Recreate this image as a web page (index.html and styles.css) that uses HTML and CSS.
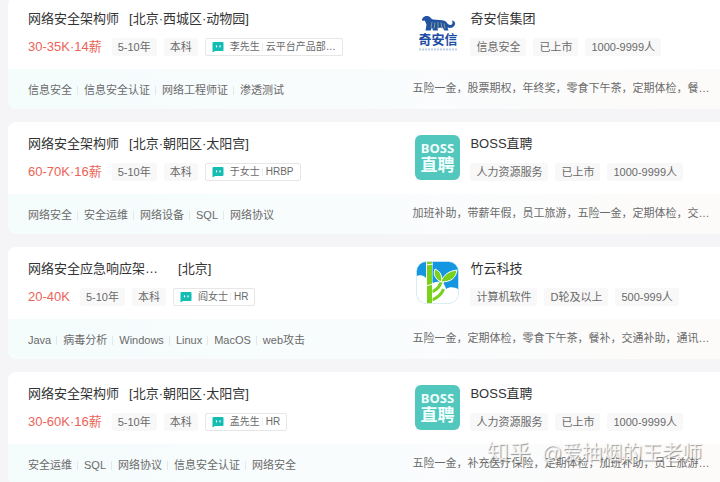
FILE: index.html
```html
<!DOCTYPE html>
<html lang="zh-CN">
<head>
    <meta charset="UTF-8">
    <meta name="viewport" content="width=device-width, initial-scale=1.0">
    <title>网络安全架构师招聘</title>
    <link rel="stylesheet" href="styles.css">
</head>
<body>

<!-- shared icons -->
<svg class="icon-defs" aria-hidden="true">
    <symbol id="icon-chat" viewBox="0 0 12 12">
        <path d="M1.5 1h9a1 1 0 0 1 1 1v7a1 1 0 0 1-1 1H3L0.500 11.500V2a1 1 0 0 1 1-1z" fill="#14bdb2"/>
        <path d="M4.500 5v.8M8 5v.8" stroke="#fff" stroke-width="1.300" stroke-linecap="round"/>
    </symbol>
    <symbol id="logo-boss" viewBox="0 0 45 45">
        <rect width="45" height="45" rx="6" fill="#51c7bd"/>
        <text x="22.5" y="18" text-anchor="middle" class="boss-en">BOSS</text>
        <text x="22.5" y="36" text-anchor="middle" class="boss-cn">直聘</text>
    </symbol>
</svg>

<main class="job-list">

    <article class="job-card">
        <div class="job-body">
            <div class="job-info">
                <div class="job-title">
                    <a href="#" class="job-name">网络安全架构师</a>
                    <span class="job-area">[北京·西城区·动物园]</span>
                </div>
                <div class="tag-row">
                    <span class="salary">30-35K·14薪</span>
                    <span class="tag">5-10年</span>
                    <span class="tag">本科</span>
                    <button type="button" class="boss">
                        <svg class="chat"><use href="#icon-chat"/></svg>
                        <span>李先生</span>
                        <span class="boss-role">云平台产品部…</span>
                    </button>
                </div>
            </div>
            <div class="company">
                <svg class="logo" viewBox="0 0 45 45" role="img" aria-label="奇安信">
                    <rect width="45" height="45" fill="#fff"/>
                    <path d="M7 10c0-3 4-5 7-3.500 2 1 2 2.500 4 3 4 .5 9 0 12 1.500 2 1 3 4 5 4 2.500 0 3-2 2-4.500 3 .5 4 3 2.500 5-1.500 2.500-4.500 3-7 2l1 3h-4l-2-3-5 .5.5 2.500h-5l-1-3-1.500 3h-5l1-6c-1-2-1-3-2-4-1 .5-2.500.5-2.500-.5z" fill="#2053a2"/>
                    <path d="M17 12l-1 6M20 12.500l-1 6M23 12v6.500M26 12.500l1 6M29 13.500l1 5" stroke="#8f9d8a" stroke-width="1"/>
                    <text x="23" y="34" text-anchor="middle" class="qax-cn">奇安信</text>
                    <path d="M4 39.500h39" stroke="#7f9fcf" stroke-width="2" stroke-dasharray="2 1" opacity=".5"/>
                </svg>
                <div>
                    <a href="#" class="company-name">奇安信集团</a>
                    <div class="tag-row">
                        <span class="tag">信息安全</span>
                        <span class="tag">已上市</span>
                        <span class="tag">1000-9999人</span>
                    </div>
                </div>
            </div>
        </div>
        <div class="job-footer">
            <ul class="skills">
                <li>信息安全</li>
                <li>信息安全认证</li>
                <li>网络工程师证</li>
                <li>渗透测试</li>
            </ul>
            <p class="welfare">五险一金，股票期权，年终奖，零食下午茶，定期体检，餐…</p>
        </div>
    </article>

    <article class="job-card">
        <div class="job-body">
            <div class="job-info">
                <div class="job-title">
                    <a href="#" class="job-name">网络安全架构师</a>
                    <span class="job-area">[北京·朝阳区·太阳宫]</span>
                </div>
                <div class="tag-row">
                    <span class="salary">60-70K·16薪</span>
                    <span class="tag">5-10年</span>
                    <span class="tag">本科</span>
                    <button type="button" class="boss">
                        <svg class="chat"><use href="#icon-chat"/></svg>
                        <span>于女士</span>
                        <span class="boss-role">HRBP</span>
                    </button>
                </div>
            </div>
            <div class="company">
                <svg class="logo"><use href="#logo-boss"/></svg>
                <div>
                    <a href="#" class="company-name">BOSS直聘</a>
                    <div class="tag-row">
                        <span class="tag">人力资源服务</span>
                        <span class="tag">已上市</span>
                        <span class="tag">1000-9999人</span>
                    </div>
                </div>
            </div>
        </div>
        <div class="job-footer">
            <ul class="skills">
                <li>网络安全</li>
                <li>安全运维</li>
                <li>网络设备</li>
                <li>SQL</li>
                <li>网络协议</li>
            </ul>
            <p class="welfare">加班补助，带薪年假，员工旅游，五险一金，定期体检，交…</p>
        </div>
    </article>

    <article class="job-card">
        <div class="job-body">
            <div class="job-info">
                <div class="job-title">
                    <a href="#" class="job-name">网络安全应急响应架…</a>
                    <span class="job-area job-area-far">[北京]</span>
                </div>
                <div class="tag-row">
                    <span class="salary">20-40K</span>
                    <span class="tag">5-10年</span>
                    <span class="tag">本科</span>
                    <button type="button" class="boss">
                        <svg class="chat"><use href="#icon-chat"/></svg>
                        <span>阎女士</span>
                        <span class="boss-role">HR</span>
                    </button>
                </div>
            </div>
            <div class="company">
                <svg class="logo" viewBox="0 0 45 45" role="img" aria-label="竹云科技">
                    <clipPath id="bamboo-clip"><rect x="1.500" y="1.500" width="42" height="42" rx="10"/></clipPath>
                    <g clip-path="url(#bamboo-clip)">
                        <rect width="45" height="45" fill="#1496e0"/>
                        <path d="M0 17c4-3 9-2 11 1l7 5c5-3 12-1 13 6 4-3 9-2 14 1v16H0z" fill="#fff"/>
                        <path d="M17 39c7-3 10-7 11-11M17 32c5-2 9-6 10-12" fill="none" stroke="#fff" stroke-width="5"/>
                        <path d="M17 40c7-3 10-6 11.500-11M17 32c6-3 9-7 9.500-12" fill="none" stroke="#79d11c" stroke-width="3"/>
                        <path d="M26 22c-6-3-8-8-6-13 5 2 8 7 6 13z" fill="#79d11c" stroke="#fff" stroke-width="1"/>
                        <path d="M26 22c2-7 8-11 16-12-1 8-6 12-16 12z" fill="#79d11c" stroke="#fff" stroke-width="1"/>
                        <path d="M11 0h6.500v45H11z" fill="#fff"/>
                        <path d="M12 0h5v45h-5z" fill="#79d11c"/>
                        <path d="M11 5l7-1M11 26l7-2" stroke="#fff" stroke-width="1"/>
                    </g>
                    <rect x="1.500" y="1.500" width="42" height="42" rx="10" fill="none" stroke="#e8f1f6" stroke-width=".6"/>
                </svg>
                <div>
                    <a href="#" class="company-name">竹云科技</a>
                    <div class="tag-row">
                        <span class="tag">计算机软件</span>
                        <span class="tag">D轮及以上</span>
                        <span class="tag">500-999人</span>
                    </div>
                </div>
            </div>
        </div>
        <div class="job-footer">
            <ul class="skills">
                <li>Java</li>
                <li>病毒分析</li>
                <li>Windows</li>
                <li>Linux</li>
                <li>MacOS</li>
                <li>web攻击</li>
            </ul>
            <p class="welfare">五险一金，定期体检，零食下午茶，餐补，交通补助，通讯…</p>
        </div>
    </article>

    <article class="job-card">
        <div class="job-body">
            <div class="job-info">
                <div class="job-title">
                    <a href="#" class="job-name">网络安全架构师</a>
                    <span class="job-area">[北京·朝阳区·太阳宫]</span>
                </div>
                <div class="tag-row">
                    <span class="salary">30-60K·16薪</span>
                    <span class="tag">5-10年</span>
                    <span class="tag">本科</span>
                    <button type="button" class="boss">
                        <svg class="chat"><use href="#icon-chat"/></svg>
                        <span>孟先生</span>
                        <span class="boss-role">HR</span>
                    </button>
                </div>
            </div>
            <div class="company">
                <svg class="logo"><use href="#logo-boss"/></svg>
                <div>
                    <a href="#" class="company-name">BOSS直聘</a>
                    <div class="tag-row">
                        <span class="tag">人力资源服务</span>
                        <span class="tag">已上市</span>
                        <span class="tag">1000-9999人</span>
                    </div>
                </div>
            </div>
        </div>
        <div class="job-footer">
            <ul class="skills">
                <li>安全运维</li>
                <li>SQL</li>
                <li>网络协议</li>
                <li>信息安全认证</li>
                <li>网络安全</li>
            </ul>
            <p class="welfare">五险一金，补充医疗保险，定期体检，加班补助，员工旅游…</p>
        </div>
    </article>

    <div class="watermark">
        <span class="watermark-site">知乎</span>
        <span>@爱抽烟的王老师</span>
    </div>
</main>

</body>
</html>
```

FILE: styles.css
```css
body {
    margin: 0;
    font-family: "Liberation Sans", "Noto Sans CJK SC", sans-serif;
    font-size: 11px;
    line-height: 18px;
    color: #6a6a6a;
    background-color: #f5f5f8;
}

a {
    color: #333;
    text-decoration: none;
}

a:hover {
    color: #14bdb2;
}

.icon-defs {
    display: none;
}

.job-list {
    position: relative;
    display: flex;
    flex-direction: column;
    gap: 13px;
    margin-top: -3px;
    padding-left: 8px;
}

.job-card {
    background-color: #fff;
    border-radius: 8px 0 0 8px;
    overflow: hidden;
    white-space: nowrap;
}

.job-body,
.job-footer {
    display: grid;
    grid-template-columns: minmax(0, 5fr) minmax(0, 4fr);
    padding-left: 20px;
}

.job-body {
    padding-top: 13px;
    padding-bottom: 13px;
}

.job-title {
    display: flex;
    gap: 10px;
    margin-bottom: 10px;
    font-size: 13px;
    color: #333;
}

.job-area-far {
    margin-left: 10px;
}

.tag-row {
    display: flex;
    gap: 7px;
}

.salary {
    margin-right: 3px;
    font-size: 13px;
    color: #ec6357;
}

.tag {
    padding: 0 6px;
    border-radius: 3px;
    background-color: #f8f8f8;
}

.boss {
    display: flex;
    align-items: center;
    height: 18px;
    padding: 0 6px;
    border: 1px solid #e6e6e6;
    border-radius: 2px;
    background-color: #fff;
    font-family: inherit;
    font-size: 10px;
    line-height: 16px;
    color: #6a6a6a;
    cursor: pointer;
}

.chat {
    width: 12px;
    height: 12px;
    margin-right: 6px;
}

.boss-role {
    display: flex;
    align-items: center;
}

.boss-role::before {
    content: "";
    width: 1px;
    height: 8px;
    margin: 0 3px 0 2px;
    background-color: #ececec;
}

.company {
    display: flex;
    gap: 10px;
    padding-left: 3px;
}

.logo {
    flex: none;
    width: 45px;
    height: 45px;
}

.company-name {
    display: block;
    margin-bottom: 10px;
    font-size: 13px;
}

.boss-en,
.boss-cn,
.qax-cn {
    font-family: "Noto Sans", "Noto Sans CJK SC", sans-serif;
    font-weight: bold;
    fill: #f2fffd;
}

.boss-en {
    font-size: 13px;
}

.boss-cn {
    font-size: 17px;
}

.qax-cn {
    font-size: 13px;
    fill: #1d4da3;
}

.job-footer {
    padding-top: 10px;
    padding-bottom: 10px;
    background: linear-gradient(90deg, #f4fcfc, #fafcfd 60%, #fdfbf9);
}

.skills {
    display: flex;
    margin: 2px 0 0;
    padding: 0;
    list-style: none;
}

.skills li {
    display: flex;
    align-items: center;
}

.skills li + li::before {
    content: "";
    width: 1px;
    height: 9px;
    margin: 0 6px 0 5px;
    background-color: #e3e8e8;
}

.welfare {
    margin: 0;
    overflow: hidden;
    text-overflow: ellipsis;
}

.watermark {
    position: absolute;
    right: 18px;
    bottom: 16px;
    display: flex;
    gap: 11px;
    font-size: 20px;
    line-height: 30px;
    color: rgba(255, 255, 255, 0.8);
    text-shadow: 1px 1px 1px rgba(90, 90, 90, 0.6);
    white-space: nowrap;
    pointer-events: none;
}

.watermark-site {
    font-size: 22px;
}
```
